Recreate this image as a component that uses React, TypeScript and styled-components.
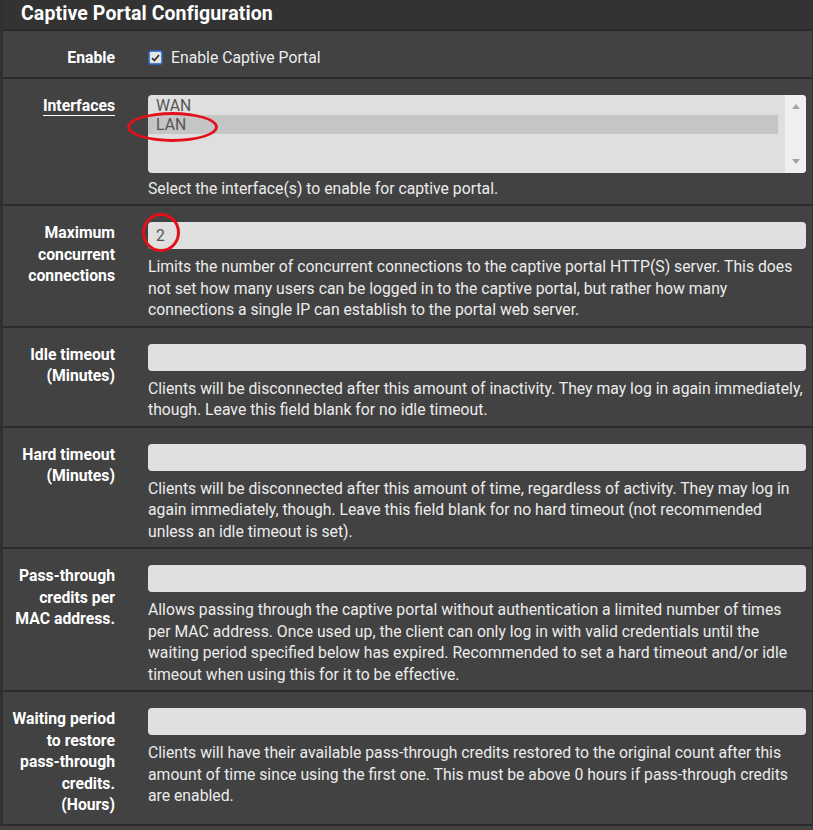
import React from 'react'
import styled, { createGlobalStyle } from 'styled-components'

const GlobalStyle = createGlobalStyle`
  html, body {
    margin: 0;
    padding: 0;
    background: #424242;
  }
  body {
    font-family: Roboto, "Liberation Sans", Arial, sans-serif;
    font-size: 15.75px;
    color: #e8e8e8;
  }
`

type Row = {
  label: string[];
  help?: string;
  value?: string;
  circled?: boolean;
}

const rows: Row[] = [
  {
    label: ['Maximum', 'concurrent', 'connections'],
    value: '2',
    circled: true,
    help: 'Limits the number of concurrent connections to the captive portal HTTP(S) server. This does not set how many users can be logged in to the captive portal, but rather how many connections a single IP can establish to the portal web server.'
  },
  {
    label: ['Idle timeout', '(Minutes)'],
    help: 'Clients will be disconnected after this amount of inactivity. They may log in again immediately, though. Leave this field blank for no idle timeout.'
  },
  {
    label: ['Hard timeout', '(Minutes)'],
    help: 'Clients will be disconnected after this amount of time, regardless of activity. They may log in again immediately, though. Leave this field blank for no hard timeout (not recommended unless an idle timeout is set).'
  },
  {
    label: ['Pass-through', 'credits per', 'MAC address.'],
    help: 'Allows passing through the captive portal without authentication a limited number of times per MAC address. Once used up, the client can only log in with valid credentials until the waiting period specified below has expired. Recommended to set a hard timeout and/or idle timeout when using this for it to be effective.'
  },
  {
    label: ['Waiting period', 'to restore', 'pass-through', 'credits.', '(Hours)'],
    help: 'Clients will have their available pass-through credits restored to the original count after this amount of time since using the first one. This must be above 0 hours if pass-through credits are enabled.'
  }
]

const App = () => {
  return (
    <>
      <GlobalStyle />
      <Panel>
        <Heading>Captive Portal Configuration</Heading>
        <FormRow>
          <Label>Enable</Label>
          <CheckLine>
            <CheckBox>
              <svg width="9" height="8" viewBox="0 0 9 8">
                <path d="M1 4.2 L3.4 6.5 L8 1" fill="none" stroke="#333" strokeWidth="1.8" />
              </svg>
            </CheckBox>
            Enable Captive Portal
          </CheckLine>
        </FormRow>
        <FormRow>
          <Label><LinkText>Interfaces</LinkText></Label>
          <Field>
            <ListBox>
              <Options>
                <Option>WAN</Option>
                <Option $selected>LAN</Option>
                <Mark $left={-21} $top={17} $w={91} $h={30} />
              </Options>
              <ScrollBar>
                <Arrow $up />
                <Arrow />
              </ScrollBar>
            </ListBox>
            <Help $gap={5}>Select the interface(s) to enable for captive portal.</Help>
          </Field>
        </FormRow>
        {rows.map((row) => (
          <FormRow key={row.label.join(' ')}>
            <Label>
              {row.label.map((l) => <div key={l}>{l}</div>)}
            </Label>
            <Field>
              <InputWrap>
                <TextInput readOnly value={row.value ?? ''} />
                {row.circled && <Mark $left={-6} $top={-9} $w={38} $h={39} />}
              </InputWrap>
              <Help $gap={7}>{row.help}</Help>
            </Field>
          </FormRow>
        ))}
      </Panel>
    </>
  )
}

const Panel = styled.div`
  width: 813px;
  box-sizing: border-box;
  border-left: 3px solid #303030;
  border-right: 1px solid #363636;
  background: #424242;
`

const Heading = styled.div`
  height: 29px;
  line-height: 28px;
  padding-left: 18px;
  background: #333333;
  color: #ffffff;
  font-size: 19.5px;
  font-weight: 700;
  letter-spacing: 0.1px;
  border-bottom: 2px solid #2a2a2a;
`

const FormRow = styled.div`
  display: grid;
  grid-template-columns: 112px 1fr;
  column-gap: 33px;
  align-items: start;
  padding: 16px 6px 5px 0;
  border-bottom: 2px solid #2b2b2b;
  line-height: 21.5px;
`

const Label = styled.div`
  text-align: right;
  color: #ffffff;
  font-weight: 700;
  margin-bottom: 3px;
`

const LinkText = styled.span`
  text-decoration: underline;
  text-underline-offset: 4px;
`

const CheckLine = styled.div`
  display: flex;
  align-items: center;
  gap: 9px;
  color: #ececec;
  padding-left: 1px;
`

const CheckBox = styled.span`
  width: 11px;
  height: 11px;
  display: flex;
  align-items: center;
  justify-content: center;
  background: #e6e6e6;
  border: 1px solid #4f7cc9;
  box-shadow: 0 0 0 1px #2f5fb0;
  border-radius: 2px;
`

const Field = styled.div`
  display: flex;
  flex-direction: column;
  min-width: 0;
`

const ListBox = styled.div`
  display: flex;
  height: 78px;
  background: #dfdfdf;
  border-radius: 4px;
`

const Options = styled.div`
  position: relative;
  flex: 1;
  padding: 1px 0 0 8px;
  margin-right: 7px;
`

const Option = styled.div<{ $selected?: boolean }>`
  height: 19px;
  line-height: 19px;
  color: #555555;
  background: ${(p) => (p.$selected ? '#c5c5c5' : 'transparent')};
  margin-left: -8px;
  padding-left: 8px;
`

const ScrollBar = styled.div`
  width: 21px;
  background: #efefef;
  border-radius: 0 4px 4px 0;
  display: flex;
  flex-direction: column;
  justify-content: space-between;
  align-items: center;
  padding: 9px 0;
  box-sizing: border-box;
`

const Arrow = styled.span<{ $up?: boolean }>`
  width: 0;
  height: 0;
  border-left: 4px solid transparent;
  border-right: 4px solid transparent;
  ${(p) => (p.$up ? 'border-bottom: 5px solid #a3a3a3;' : 'border-top: 5px solid #a3a3a3;')}
`

const Mark = styled.span<{ $left: number; $top: number; $w: number; $h: number }>`
  position: absolute;
  left: ${(p) => p.$left}px;
  top: ${(p) => p.$top}px;
  width: ${(p) => p.$w}px;
  height: ${(p) => p.$h}px;
  border: 3px solid #e3101c;
  border-radius: 50%;
  box-sizing: border-box;
  pointer-events: none;
`

const InputWrap = styled.div`
  position: relative;
`

const TextInput = styled.input`
  display: block;
  width: 100%;
  height: 27px;
  box-sizing: border-box;
  border: none;
  border-radius: 4px;
  background: #e0e0e0;
  padding: 0 8px;
  font-family: Roboto, "Liberation Sans", Arial, sans-serif;
  font-size: 15.75px;
  color: #555555;
  outline: none;
`

const Help = styled.div<{ $gap: number }>`
  margin-top: ${(p) => p.$gap}px;
  color: #ececec;
  line-height: 21.5px;
`

export default App
